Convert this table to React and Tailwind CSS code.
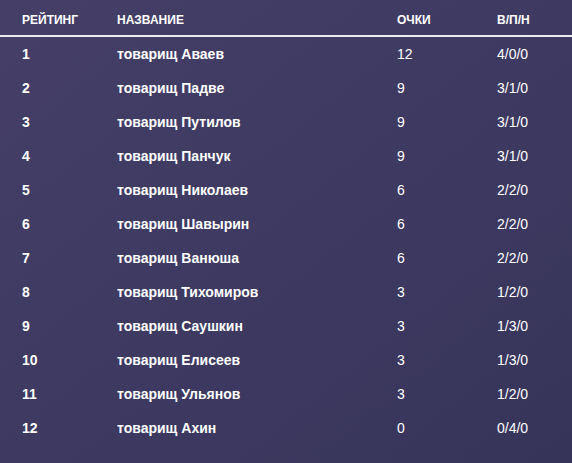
import React from 'react';

const rows = [
  ['1', 'товарищ Аваев', '12', '4/0/0'],
  ['2', 'товарищ Падве', '9', '3/1/0'],
  ['3', 'товарищ Путилов', '9', '3/1/0'],
  ['4', 'товарищ Панчук', '9', '3/1/0'],
  ['5', 'товарищ Николаев', '6', '2/2/0'],
  ['6', 'товарищ Шавырин', '6', '2/2/0'],
  ['7', 'товарищ Ванюша', '6', '2/2/0'],
  ['8', 'товарищ Тихомиров', '3', '1/2/0'],
  ['9', 'товарищ Саушкин', '3', '1/3/0'],
  ['10', 'товарищ Елисеев', '3', '1/3/0'],
  ['11', 'товарищ Ульянов', '3', '1/2/0'],
  ['12', 'товарищ Ахин', '0', '0/4/0'],
];

export default function App() {
  return (
    <div className="w-[572px] h-[463px] bg-gradient-to-br from-[#453f68] to-[#37345a] text-white font-['Liberation_Sans',Arial,sans-serif] overflow-hidden">
      {/* Header */}
      <div className="grid grid-cols-[95px_280px_100px_1fr] pl-[22px] pt-[13px] pb-[8px] border-b-2 border-white/90 text-[12px] leading-[14px] font-bold uppercase">
        <div>Рейтинг</div>
        <div>Название</div>
        <div>Очки</div>
        <div>В/П/Н</div>
      </div>

      {/* Rows */}
      {rows.map(([rank, name, pts, wld]) => (
        <div key={rank} className="grid grid-cols-[95px_280px_100px_1fr] pl-[22px] h-[34px] items-center text-[14px]">
          <div className="font-bold">{rank}</div>
          <div className="font-bold">{name}</div>
          <div>{pts}</div>
          <div>{wld}</div>
        </div>
      ))}
    </div>
  );
}
